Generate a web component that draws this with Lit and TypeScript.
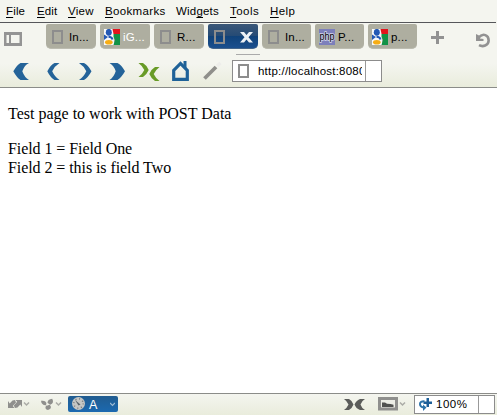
import { LitElement, html, svg, css } from "lit";
import { customElement, property } from "lit/decorators.js";

const googleIcon = html`<svg width="16" height="16" viewBox="0 0 16 16">
  <path d="M0 0h10v16H0z" fill="#f7f8fa"/>
  <path d="M8.500 0H16v5H9.500z" fill="#e2141c"/>
  <path d="M9.500 5H16v11H9.500l1.500-5-1.500-3z" fill="#119247"/>
  <path d="M0 5.500l4 2.500-4 3z" fill="#2459b5"/>
  <ellipse cx="4.800" cy="3.300" rx="3" ry="3.400" fill="#2459b5"/>
  <path d="M4.500 7.800q3.500.2 4 2.700" fill="none" stroke="#2459b5" stroke-width="2"/>
  <ellipse cx="4.800" cy="13.300" rx="3.800" ry="2.300" fill="#f7ad14"/>
</svg>`;

const phpIcon = html`<svg width="16" height="16" viewBox="0 0 16 16">
  <path d="M0 0h16v16H0z" fill="#7c7fbb"/>
  <text x="8" y="11" text-anchor="middle" textLength="15" lengthAdjust="spacingAndGlyphs" font-family="Liberation Sans, sans-serif" font-size="10" fill="#000" stroke="#d5d6ec" stroke-width="1.600" paint-order="stroke">php</text>
</svg>`;

const pageIcon = html`<svg width="11" height="14" viewBox="0 0 11 14">
  <path d="M1 1h9v12H1z" fill="none" stroke="#8d8d8d" stroke-width="2"/>
</svg>`;

const chevron = (y: number) => svg`<path d="M0 ${y}l2.500 2.500 2.500-2.500" fill="none" stroke="#aaaba6" stroke-width="1.500"/>`;

@customElement("browser-tab")
class BrowserTab extends LitElement {
  @property() label = "";
  @property() icon = "page";
  @property({ type: Boolean }) active = false;
  @property({ type: Boolean }) light = false;

  static styles = css`
    :host { display: block; height: 25px; }
    .tab {
      display: flex; align-items: center; box-sizing: border-box; height: 25px;
      padding: 1px 0 0 4px; border-radius: 2px 2px 5px 5px; overflow: hidden;
      background: #aeaea0; color: #000; font-size: 11.5px; white-space: nowrap;
      border-bottom: 1px solid #bcbcb1;
    }
    .active { background: linear-gradient(#3c5878, #264b75 48%, #104279 50%, #1b4f8e); border-bottom-color: #45668c; }
    .light { color: #fff; }
    .icon { display: flex; justify-content: flex-start; width: 19px; flex: none; }
    .page { box-sizing: border-box; padding-left: 2px; }
    .text { letter-spacing: 0.15px; }
    svg { display: block; }
    .close { margin: 2px 0 0 9px; }
  `;

  render() {
    const art = this.icon === "google" ? googleIcon : this.icon === "php" ? phpIcon : pageIcon;
    return html`<div class="tab ${this.active ? "active" : ""} ${this.light ? "light" : ""}">
      <span class="icon ${this.icon}">${art}</span>
      ${this.active
        ? html`<svg class="close" width="13" height="11" viewBox="0 0 13 11">
            <path d="M0 0h4l2.500 3L9 0h4L8.500 5.300 13 10.500H9L6.500 7.500 4 10.500H0L4.500 5.300z" fill="#edf1f5"/></svg>`
        : html`<span class="text">${this.label}</span>`}
    </div>`;
  }
}

@customElement("app-root")
class AppRoot extends LitElement {
  static styles = css`
    :host {
      display: flex; flex-direction: column; height: 415px; width: 497px; overflow: hidden;
      font-family: "Liberation Sans", Arial, sans-serif; font-size: 11.5px; color: #000; background: #f4f5ef;
    }
    svg { display: block; flex: none; }
    .menu { display: flex; height: 22px; flex: none; padding-left: 6px; line-height: 23px; box-sizing: border-box; }
    .menu span { white-space: nowrap; flex: none; }
    .menu u { text-underline-offset: 1.5px; text-decoration-thickness: 1px; }
    .tabs { display: flex; height: 32px; flex: none; border-top: 1px solid #55565a; box-sizing: border-box; padding: 1px 0 0 4px; width: 496px; }
    .panel { margin: 8px 24px 0 0; }
    .strip { display: grid; grid-template-columns: repeat(4, 50px) 49px 49px 49px; gap: 4px; width: 371px; flex: none; }
    .plus { margin: 7px 0 0 14px; }
    .undo { margin: 9px 0 0 32px; }
    .tools { height: 34px; flex: none; display: flex; border-bottom: 1px solid #8b8c89; box-sizing: border-box; background: linear-gradient(#f4f5ef 30%, #e9ecdc); }
    .nav { width: 232px; height: 34px; }
    .addr { display: flex; position: relative; width: 150px; height: 22px; margin-top: 6px; box-sizing: border-box; border: 1px solid #8c8c8c; background: #fff; align-items: center; }
    .addr svg { margin: 0 9px 0 5px; }
    .url { width: 104px; overflow: hidden; white-space: nowrap; flex: none; line-height: 18px; letter-spacing: 0.22px; }
    .drop { border-left: 1px solid #999; height: 100%; margin-left: 3px; }
    .grip { position: absolute; left: 3px; top: -7px; width: 24px; height: 1px; background: #aaa; }
    .page { flex: 1; background: #fff; padding: 16px 8px; font: 16px/19px "Liberation Serif", "Times New Roman", serif; box-sizing: border-box; }
    .page p { margin: 0 0 16px; white-space: nowrap; }
    .page .fields { letter-spacing: -0.07px; }
    .status { display: flex; height: 22px; flex: none; border-top: 1px solid #8b8c89; box-sizing: border-box; background: linear-gradient(#f4f5ef, #e9ecdc); }
    .mode { width: 50px; height: 16px; margin-top: 2px; display: flex; align-items: center; border-radius: 2px; background: linear-gradient(#215c90, #1b69b0); color: #fff; font-size: 12.5px; }
    .mode span { margin: 1px 12px 0 3px; width: 9px; }
    .right { width: 84px; margin-left: 213px; }
    .zoom { display: flex; align-items: center; width: 81px; height: 19px; margin-top: 1px; margin-left: -1px; box-sizing: border-box; border: 1px solid #8c8c8c; background: #fff; flex: none; }
    .zoom svg { margin: 0 4px 1px 3px; }
    .zoom .pct { width: 42px; margin-bottom: 1px; letter-spacing: 0.5px; }
    .zoom .end { height: 100%; border-left: 1px solid #999; }
  `;

  private menuItems: [string, number, number][] = [
    ["File", 31, 0.15], ["Edit", 31, 0.15], ["View", 37, 0.25], ["Bookmarks", 71, 0.35],
    ["Widgets", 54, 0.2], ["Tools", 40, 0.45], ["Help", 40, 0.4],
  ];

  private menuItem([label, width, tracking]: [string, number, number]) {
    const key = label === "Widgets" ? 3 : 0;
    return html`<span style="width:${width}px;letter-spacing:${tracking}px">${label.slice(0, key)}<u>${label[key]}</u>${label.slice(key + 1)}</span>`;
  }

  render() {
    return html`
      <div class="menu">${this.menuItems.map((m) => this.menuItem(m))}</div>
      <div class="tabs">
        <svg class="panel" width="18" height="15" viewBox="0 0 18 15">
          <path d="M0 0h18v14H0z" fill="#949494"/><path d="M2.500 3h2.500v8H2.500zM7 3h8.500v8H7z" fill="#f4f5ef"/>
        </svg>
        <div class="strip">
          <browser-tab label="In..."></browser-tab>
          <browser-tab label="iG..." icon="google" light></browser-tab>
          <browser-tab label="R..."></browser-tab>
          <browser-tab active></browser-tab>
          <browser-tab label="In..."></browser-tab>
          <browser-tab label="P..." icon="php"></browser-tab>
          <browser-tab label="p..." icon="google"></browser-tab>
        </div>
        <svg class="plus" width="13" height="13" viewBox="0 0 13 13"><path d="M5 0h3v5h5v3H8v5H5V8H0V5h5z" fill="#929292"/></svg>
        <svg class="undo" width="15" height="15" viewBox="0 0 15 15">
          <path d="M2.500 4.800C7 -.8 13 2.200 12.600 8c-.4 4.500-5.600 6.300-9.600 4.200" fill="none" stroke="#929292" stroke-width="2.600"/>
          <path d="M0 1v7h7.500V6L4 5.400V3z" fill="#929292"/>
        </svg>
      </div>
      <div class="tools">
        <svg class="nav" viewBox="0 54 232 34">
          <g fill="#246399">
            <path d="M20.500 63H29q-4.500 2-6.700 8.300Q24.500 77.500 29 80h-8.500q-3.500-2-7.200-8.700Q17 65 20.500 63z"/>
            <path d="M54.500 63h5q-4.800 3-7.300 8.300 2.500 5.700 7.300 8.700h-5q-4.200-2.500-7.200-8.700Q50.500 65 54.500 63z"/>
            <path d="M84 63h-5q4.800 3 7.300 8.300-2.500 5.700-7.300 8.700h5q4.200-2.500 7.500-8.700Q88 65 84 63z"/>
            <path d="M117.500 63h-8q4.300 2.300 6.200 8.300-1.900 6-6.200 8.700h8q4-2.500 7.500-8.700Q121.500 65 117.500 63z"/>
          </g>
          <g fill="#689b27">
            <path d="M138.500 63h4.500q3.500 2 5.700 7-2.200 5-5.700 7h-4.500q4-3 5.800-7-1.800-4-5.800-7z"/>
            <path d="M159.500 67H155q-3.500 2-5.700 7 2.200 5 5.700 7h4.500q-4-3-5.800-7 1.800-4 5.800-7z"/>
          </g>
          <path d="M173.700 79.300V70.500l6.800-7 6.800 7v8.800z" fill="none" stroke="#1f6298" stroke-width="3.200"/>
          <path d="M183.500 61h3v7h-3z" fill="#1f6298"/>
          <path d="M204.500 78.500L216 67" stroke="#8f8f8b" stroke-width="3.800"/>
          <path d="M217 66l3.500-3" stroke="#ededea" stroke-width="3.500"/>
        </svg>
        <div class="addr">
          <i class="grip"></i>${pageIcon}<span class="url">http://localhost:8080</span><i class="drop"></i>
        </div>
      </div>
      <div class="page">
        <p>Test page to work with POST Data</p>
        <p class="fields">Field 1 = Field One<br />Field 2 = this is field Two</p>
      </div>
      <div class="status">
        <svg width="68" height="21" viewBox="0 394 68 21">
          <g fill="#8f8f8d">
            <path d="M8 401v7h6.500l-1.700-2 3.200-3.500-1-2.500-2.500.5-2.800 3z"/>
            <path d="M22 407v-7h-6.500l1.700 1.800-3.400 3.700 1.200 2.500 2.500-.5 2.800-3z"/>
            <path d="M41 400.800q5-.8 5.500 3l-.5 1.400q-4.500.2-5-4.400z"/>
            <path d="M47.500 403q0-4 4.700-4.300 2.300 4.300-2 6z"/>
            <path d="M46 405.800l3.800-1q3 3.700-1.800 5.200-3.800-.8-2-4.200z"/>
          </g>
          <circle cx="47.500" cy="404.300" r="1" fill="#eff0e8"/>
          <g transform="translate(24 0)">${chevron(402.5)}</g>
          <g transform="translate(56 0)">${chevron(402.5)}</g>
        </svg>
        <div class="mode">
          <svg width="18" height="16" viewBox="0 0 18 16">
            <circle cx="10.500" cy="7.500" r="6.500" fill="#c5c6c4"/>
            <circle cx="10.500" cy="7.500" r="4.700" fill="none" stroke="#7b7f82" stroke-width="1.500" stroke-dasharray="1 2.700"/>
            <path d="M7 4l5.500 4.500-2 1z" fill="#59636b"/>
          </svg>
          <span>A</span>
          <svg width="5" height="5" viewBox="0 0 5 5"><path d="M0 1l2.500 2.500L5 1" fill="none" stroke="#9dbad4" stroke-width="1.200"/></svg>
        </div>
        <svg class="right" height="21" viewBox="331 394 84 21">
          <path d="M344 399h5q3 1.500 4.500 5.500-1.500 4-4.500 5.500h-5q3-2 4.500-5.500-1.500-3.500-4.500-5.500zM365 399h-5q-4 1.500-5.500 5.500 1.500 4 5.500 5.500h5q-3.500-2-4.500-5.500 1-3.500 4.500-5.500z" fill="#5b5c5a"/>
          <path d="M379.500 398.500h17v10.500h-17z" fill="#ecede5" stroke="#8f8f8d" stroke-width="3"/>
          <path d="M382 407V402.500h3l2 1.300 3.500.2 3 .8V407z" fill="#50514f"/>
          <g transform="translate(400 0)">${chevron(402.5)}</g>
        </svg>
        <div class="zoom">
          <svg width="14" height="13" viewBox="0 0 14 13">
            <path d="M6.500 3.200Q2 3 2 6T6 9.500" fill="none" stroke="#2c73a9" stroke-width="2"/>
            <path d="M5 6.500V13l3.500-3.500z" fill="#2c73a9"/><path d="M8.500 0H11v3.500h3V6h-3v3H8.500V6h-3V3.500h3z" fill="#1d5f98"/>
          </svg>
          <span class="pct">100%</span><i class="end"></i>
        </div>
      </div>`;
  }
}
